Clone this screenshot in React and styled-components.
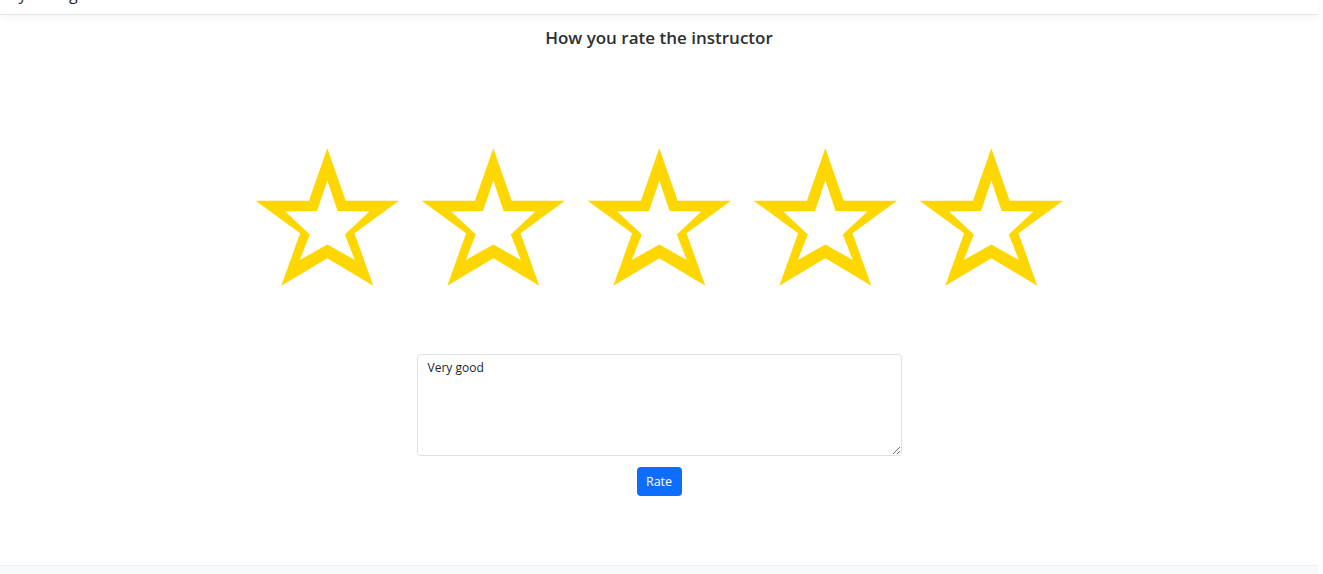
import React from 'react'
import styled, { createGlobalStyle } from 'styled-components'

const GlobalStyle = createGlobalStyle`
  body {
    margin: 0;
    background: #fff;
    font-family: "Open Sans", "Noto Sans", "Liberation Sans", sans-serif;
    color: #212529;
  }
`

const Page = styled.div`
  min-height: 574px;
  display: flex;
  flex-direction: column;
  padding-right: 5px;
`

const Navbar = styled.header`
  height: 14px;
  overflow: hidden;
  border-bottom: 1px solid #e5e5e5;
  box-shadow: 0 2px 8px rgba(0, 0, 0, 0.05);
  padding-left: 4px;

  span {
    display: block;
    margin-top: -16px;
    font-size: 16px;
    line-height: 20px;
    color: #212529;
  }
`

const Main = styled.main`
  flex: 1;
  display: flex;
  flex-direction: column;
  align-items: center;
`

const Title = styled.h4`
  margin: 12px 0 0;
  font-size: 17px;
  font-weight: 600;
  line-height: 22px;
  color: #2b2f33;
`

const Stars = styled.div`
  display: flex;
  gap: 20px;
  margin-top: 99px;
`

const StarButton = styled.button`
  border: 0;
  padding: 0;
  background: none;
  cursor: pointer;
  display: block;

  svg {
    display: block;
  }
`

const Form = styled.form`
  margin-top: 68px;
  display: flex;
  flex-direction: column;
  align-items: center;
  gap: 11px;
`

const Comment = styled.textarea`
  box-sizing: border-box;
  width: 485px;
  height: 102px;
  border: 1px solid #dee2e6;
  border-radius: 4px;
  padding: 4px 10px;
  font-family: inherit;
  font-size: 12px;
  line-height: 1.5;
  color: #212529;
  outline: none;
`

const Button = styled.button`
  width: 45px;
  height: 29px;
  border: 0;
  border-radius: 4px;
  background: #0d6efd;
  color: #fff;
  font-family: inherit;
  font-size: 12.5px;
  cursor: pointer;
`

const Footer = styled.footer`
  height: 8px;
  border-top: 1px solid #ededed;
  background: #f8f9fa;
`

// outline star: outer shape minus the inner hole
const outer = '73.3,0.3 91.7,52.7 145,52.7 100.5,85.3 119.3,137.7 73.3,110.3 27.3,137.7 46.1,85.3 1.6,52.7 54.9,52.7'
const inner = '73.3,32.5 83.6,63 115.3,63.5 90.8,86.5 100.8,112 73.3,96.5 45.8,112 55.8,86.5 31.3,63.5 63,63'

const Star = () => (
  <svg width="146" height="138" viewBox="0 0 146 138">
    <path
      d={`M${outer.replace(/ /g, ' L')} Z M${inner.replace(/ /g, ' L')} Z`}
      fill="#ffd700"
      fillRule="evenodd"
    />
  </svg>
)

export default function App() {
  return (
    <>
      <GlobalStyle />
      <Page>
        <Navbar>
          <span>My Rating</span>
        </Navbar>
        <Main>
          <Title>How you rate the instructor</Title>
          <Stars>
            {[1, 2, 3, 4, 5].map((n) => (
              <StarButton key={n} type="button" aria-label={`${n} star`}>
                <Star />
              </StarButton>
            ))}
          </Stars>
          <Form onSubmit={(e) => e.preventDefault()}>
            <Comment defaultValue="Very good" />
            <Button type="submit">Rate</Button>
          </Form>
        </Main>
        <Footer />
      </Page>
    </>
  )
}
